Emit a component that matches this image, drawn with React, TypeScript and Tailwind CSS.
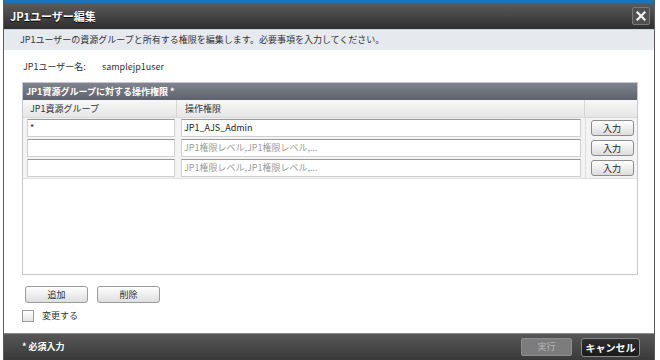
import React from "react";

const jp = { fontFamily: '"Noto Sans CJK JP", "Noto Sans", sans-serif' };

function InputBtn() {
  return (
    <button className="h-[16px] w-[43px] rounded-[3px] border border-[#8c8c8c] bg-gradient-to-b from-[#ffffff] to-[#dcdcdc] text-[9px] leading-none text-[#222]">
      入力
    </button>
  );
}

function Row({ g, p, ph }: { g: string; p: string; ph: boolean }) {
  return (
    <div className="flex h-[20px] items-center">
      <div className="flex h-full w-[154px] items-center pl-[4px] pr-[2px]">
        <div className="flex h-[18px] w-full items-center border border-[#cfcfcf] border-t-[#9a9a9a] bg-white pl-[2px] text-[9px] text-[#222]">
          {g}
        </div>
      </div>
      <div className="flex h-full w-[408px] items-center pl-[4px] pr-[4px]">
        <div
          className={`flex h-[18px] w-full items-center border border-[#cfcfcf] border-t-[#9a9a9a] bg-white pl-[2px] text-[9px] ${
            ph ? "text-[#9a9a9a]" : "text-[#222]"
          }`}
        >
          {p}
        </div>
      </div>
      <div className="flex h-full flex-1 items-center justify-center border-l border-[#dcdcdc] pl-[1px]">
        <InputBtn />
      </div>
    </div>
  );
}

export default function App() {
  return (
    <div className="h-[360px] w-[660px] overflow-hidden bg-white pl-[3px]" style={jp}>
      <div className="flex h-full w-[652px] flex-col border-x border-[#5a5a5a]">
        <div className="h-[3px] bg-[#1f73b5]" />
        <div className="flex h-[26px] items-center justify-between bg-gradient-to-b from-[#5c5c5c] to-[#2f2f2f] pl-[6px] pr-[4px]">
          <span className="text-[11px] font-bold text-white [text-shadow:0_1px_1px_#000]">JP1ユーザー編集</span>
          <div className="flex h-[18px] w-[18px] items-center justify-center rounded-[2px] border border-[#7a7a7a] bg-[#505050]">
            <svg width="10" height="10" viewBox="0 0 10 10">
              <path d="M1.5 1.5 L8.5 8.5 M8.5 1.5 L1.5 8.5" stroke="#f2f2f2" strokeWidth="2.2" strokeLinecap="square" />
            </svg>
          </div>
        </div>
        <div className="flex h-[21px] items-center border-t border-[#d0d4da] bg-[#e6e9ee] pl-[16px] text-[9px] text-[#333]">
          JP1ユーザーの資源グループと所有する権限を編集します。必要事項を入力してください。
        </div>
        <div className="flex flex-1 flex-col bg-white pl-[18px] pr-[16px]">
          <div className="mt-[10px] flex h-[14px] items-center pl-[1px] text-[9px] text-[#333]">
            <span className="w-[79px]">JP1ユーザー名:</span>
            <span>samplejp1user</span>
          </div>
          <div className="mt-[8px] flex h-[193px] flex-col border border-[#c4c8ce]">
            <div className="flex h-[17px] items-center bg-gradient-to-b from-[#80848e] to-[#5e626c] pl-[3px] text-[9px] font-bold text-white">
              JP1資源グループに対する操作権限 *
            </div>
            <div className="flex h-[18px] items-center border-b border-[#d8d8d8] bg-gradient-to-b from-[#f7f7f7] to-[#e6e6e6] text-[9px] text-[#333]">
              <div className="w-[154px] border-r border-[#d6d6d6] pl-[7px] leading-[18px]">JP1資源グループ</div>
              <div className="w-[408px] border-r border-[#d6d6d6] pl-[8px] leading-[18px]">操作権限</div>
              <div className="flex-1" />
            </div>
            <div className="border-b border-[#e0e0e0] bg-[#f3f3f3]">
              <Row g="*" p="JP1_AJS_Admin" ph={false} />
              <Row g="" p="JP1権限レベル,JP1権限レベル,..." ph={true} />
              <Row g="" p="JP1権限レベル,JP1権限レベル,..." ph={true} />
            </div>
            <div className="flex-1 bg-white" />
          </div>
          <div className="mt-[11px] flex gap-[9px] pl-[3px]">
            <button className="h-[17px] w-[63px] rounded-[3px] border border-[#9a9a9a] bg-gradient-to-b from-[#ffffff] to-[#dedede] text-[9px] text-[#333]">
              追加
            </button>
            <button className="h-[17px] w-[63px] rounded-[3px] border border-[#9a9a9a] bg-gradient-to-b from-[#ffffff] to-[#dedede] text-[9px] text-[#333]">
              削除
            </button>
          </div>
          <div className="mt-[7px] flex h-[12px] items-center gap-[8px]">
            <div className="h-[12px] w-[12px] border border-[#9a9a9a] bg-gradient-to-b from-[#ffffff] to-[#e4e4e4]" />
            <span className="text-[9px] text-[#333]">変更する</span>
          </div>
        </div>
        <div className="flex h-[27px] items-center justify-between border-t border-[#8a8a8a] bg-gradient-to-b from-[#575757] to-[#3a3a3a] pl-[18px] pr-[14px]">
          <span className="text-[9px] font-bold text-white">* 必須入力</span>
          <div className="flex items-center gap-[9px]">
            <button className="h-[18px] w-[51px] rounded-[2px] border border-[#8e8e8e] bg-[#7c7c7c] text-[9px] text-[#b4b4b4]">
              実行
            </button>
            <button className="h-[19px] w-[59px] rounded-[3px] border border-[#8a8a8a] bg-gradient-to-b from-[#2e2e2e] to-[#1a1a1a] text-[10px] font-bold text-white">
              キャンセル
            </button>
          </div>
        </div>
      </div>
    </div>
  );
}
